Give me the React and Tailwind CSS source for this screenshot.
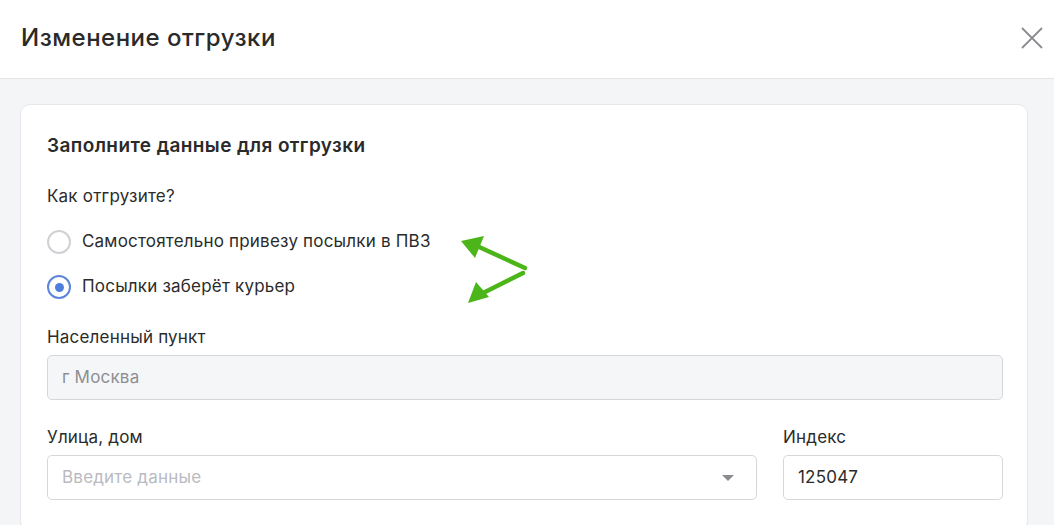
import React, { useState } from "react";

const font = { fontFamily: "Inter, 'Noto Sans', sans-serif" };

const Radio = ({ checked, label, onClick }) => (
  <button type="button" onClick={onClick} className="flex items-center gap-[11px] h-[24px] text-left">
    <span
      className={`w-[24px] h-[24px] rounded-full border-2 flex items-center justify-center shrink-0 bg-white ${
        checked ? "border-[#5b86d9]" : "border-[#cfd1d4]"
      }`}
    >
      {checked && <span className="w-[9px] h-[9px] rounded-full bg-[#4f7fdc]" />}
    </span>
    <span className="text-[17px] tracking-[0.2px] text-[#2b2b2b]">{label}</span>
  </button>
);

export default function App() {
  const [mode, setMode] = useState("courier");

  return (
    <div className="w-[1054px] h-[525px] overflow-hidden bg-[#f4f5f7] flex flex-col" style={font}>
      {/* header */}
      <div className="h-[79px] shrink-0 bg-white border-b border-[#e4e5e7] flex items-center justify-between pl-[21px] pr-[10px]">
        <h1 className="text-[24px] font-medium text-[#2a2a2a] tracking-[0.5px] -mt-[2px]">Изменение отгрузки</h1>
        <button type="button" className="p-[1px] text-[#8a8c90] -mt-[2px]">
          <svg width="22" height="22" viewBox="0 0 22 22" fill="none" stroke="currentColor" strokeWidth="1.8">
            <path d="M1 1 L21 21 M21 1 L1 21" />
          </svg>
        </button>
      </div>

      <div className="pt-[25px] pl-[20px] pr-[26px]">
        <div className="relative bg-white border border-[#e6e7ea] rounded-[10px] pl-[26px] pr-[24px] pt-[29px] pb-[30px]">
          <h2 className="text-[19px] font-semibold text-[#2a2a2a] tracking-[0.4px] leading-[24px]">
            Заполните данные для отгрузки
          </h2>
          <p className="mt-[28px] text-[17px] tracking-[0.2px] text-[#2b2b2b] leading-[20px]">Как отгрузите?</p>

          <div className="mt-[24px] flex flex-col gap-[21px]">
            <Radio
              checked={mode === "pvz"}
              onClick={() => setMode("pvz")}
              label="Самостоятельно привезу посылки в ПВЗ"
            />
            <Radio checked={mode === "courier"} onClick={() => setMode("courier")} label="Посылки заберёт курьер" />
          </div>

          {/* green pointers */}
          <svg className="absolute left-[420px] top-[130px]" width="100" height="80" viewBox="0 0 100 80">
            <path d="M84 33 L36 11" stroke="#4cb51a" strokeWidth="4.5" strokeLinecap="round" />
            <path d="M20 6 L43 1 L34 23 Z" fill="#4cb51a" />
            <path d="M82 38 L42 58" stroke="#4cb51a" strokeWidth="4.5" strokeLinecap="round" />
            <path d="M27 68 L35 47 L48 62 Z" fill="#4cb51a" />
          </svg>

          <div className="mt-[28px]">
            <label className="block text-[17px] tracking-[0.2px] text-[#2b2b2b] leading-[20px]">Населенный пункт</label>
            <div className="mt-[8px] h-[45px] rounded-[5px] border border-[#d6d7da] bg-[#f5f6f8] flex items-center px-[14px] text-[17px] tracking-[0.2px] text-[#8d8f93]">
              г Москва
            </div>
          </div>

          <div className="mt-[27px] flex gap-[26px]">
            <div className="w-[710px]">
              <label className="block text-[17px] tracking-[0.2px] text-[#2b2b2b] leading-[20px]">Улица, дом</label>
              <div className="mt-[8px] h-[45px] rounded-[5px] border border-[#d6d7da] bg-white flex items-center justify-between pl-[14px] pr-[22px] text-[17px] tracking-[0.2px] text-[#b9bbbf]">
                <span>Введите данные</span>
                <span className="w-0 h-0 border-l-[6px] border-r-[6px] border-t-[6px] border-l-transparent border-r-transparent border-t-[#8a8c90]" />
              </div>
            </div>
            <div className="flex-1">
              <label className="block text-[17px] tracking-[0.2px] text-[#2b2b2b] leading-[20px]">Индекс</label>
              <div className="mt-[8px] h-[45px] rounded-[5px] border border-[#d6d7da] bg-white flex items-center px-[14px] text-[17px] tracking-[0.2px] text-[#2b2b2b]">
                125047
              </div>
            </div>
          </div>
        </div>
      </div>
    </div>
  );
}
